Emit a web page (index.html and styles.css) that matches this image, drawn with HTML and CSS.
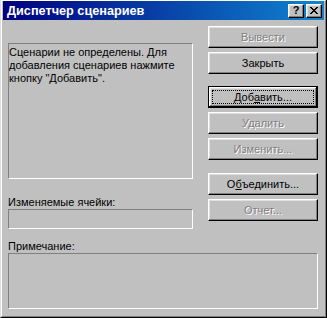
FILE: index.html
```html
<!DOCTYPE html>
<html lang="ru">
<head>
    <meta charset="UTF-8">
    <title>Диспетчер сценариев</title>
    <link rel="stylesheet" href="styles.css">
</head>
<body>

<div class="window">
    <div class="frame">
        <div class="titlebar">
            <span class="title">Диспетчер сценариев</span>
            <div class="caption-buttons">
                <button class="cap-btn help">?</button>
                <button class="cap-btn close">
                    <svg width="8" height="7" viewBox="0 0 8 7">
                        <path d="M0 0h2v1h1v1h2v-1h1v-1h2v1h-1v1h-1v1h-1v1h1v1h1v1h1v1h-2v-1h-1v-1h-2v1h-1v1h-2v-1h1v-1h1v-1h1v-1h-1v-1h-1v-1h-1z" fill="#000"/>
                    </svg>
                </button>
            </div>
        </div>

        <div class="client">
            <div class="main">
                <div class="left">
                    <div class="listbox">Сценарии не определены. Для<br>добавления сценариев нажмите<br>кнопку "Добавить".</div>
                    <label class="field-label">Изменяемые ячейки:</label>
                    <div class="field"></div>
                </div>

                <div class="buttons">
                    <button class="btn disabled">Вывести</button>
                    <button class="btn">Закрыть</button>
                    <button class="btn default group"><span class="focus">Доб<u>а</u>вить...</span></button>
                    <button class="btn disabled">Удалить</button>
                    <button class="btn disabled">Изменить...</button>
                    <button class="btn group2">О<u>б</u>ъединить...</button>
                    <button class="btn disabled">Отчет...</button>
                </div>
            </div>

            <label class="field-label note-label">Примечание:</label>
            <div class="note"></div>
        </div>
    </div>
</div>

</body>
</html>
```

FILE: styles.css
```css
* {
    margin: 0;
    padding: 0;
    box-sizing: border-box;
}
body {
    font-family: 'Liberation Sans', Arial, sans-serif;
    font-size: 11px;
    background-color: #c0c0c0;
    color: #000;
}
.window {
    width: 327px;
    height: 318px;
    background-color: #c0c0c0;
    border-left: 1px solid #dfdfdf;
    border-right: 1px solid #000;
    border-bottom: 1px solid #000;
}
.frame {
    height: 100%;
    border: 1px solid;
    border-color: #fff #808080 #808080 #fff;
    padding: 0 1px 1px 1px;
    display: flex;
    flex-direction: column;
}
.titlebar {
    height: 19px;
    background: linear-gradient(to right, #000080, #1084d0);
    display: flex;
    align-items: center;
    justify-content: space-between;
    padding: 0 2px 0 4px;
}
.title {
    color: #fff;
    font-weight: bold;
    font-size: 12.7px;
}
.caption-buttons {
    display: flex;
    gap: 2px;
}
.cap-btn {
    width: 16px;
    height: 14px;
    background-color: #c0c0c0;
    border: 1px solid;
    border-color: #fff #000 #000 #fff;
    box-shadow: inset -1px -1px #808080, inset 1px 1px #dfdfdf;
    display: flex;
    align-items: center;
    justify-content: center;
    font-family: 'Liberation Sans', Arial, sans-serif;
    font-size: 11px;
    font-weight: bold;
    line-height: 1;
    color: #000;
}
.client {
    flex: 1;
    padding: 6px 6px 0 5px;
}
.main {
    display: grid;
    grid-template-columns: 185px 110px;
    column-gap: 15px;
}
.left {
    padding-top: 17px;
    display: flex;
    flex-direction: column;
}
.listbox {
    height: 136px;
    border: 1px solid;
    border-color: #808080 #fff #fff #808080;
    padding-top: 2px;
    line-height: 13px;
    white-space: nowrap;
}
.field-label {
    display: block;
    line-height: 13px;
    margin-top: 17px;
}
.field {
    height: 20px;
    border: 1px solid;
    border-color: #808080 #fff #fff #808080;
}
.buttons {
    display: flex;
    flex-direction: column;
}
.btn {
    height: 22px;
    margin-top: 4px;
    background-color: #c0c0c0;
    border: 1px solid;
    border-color: #fff #000 #000 #fff;
    box-shadow: inset -1px -1px #808080, inset 1px 1px #dfdfdf;
    font-family: 'Liberation Sans', Arial, sans-serif;
    font-size: 11px;
    color: #000;
    display: flex;
    align-items: center;
    justify-content: center;
}
.btn:first-child {
    margin-top: 0;
}
.btn.group {
    margin-top: 12px;
}
.btn.group2 {
    margin-top: 13px;
}
.btn.disabled {
    color: #808080;
    text-shadow: 1px 1px 0 #fff;
}
.btn.default {
    border-color: #000;
    box-shadow: inset -1px -1px #000, inset 1px 1px #fff, inset -2px -2px #808080, inset 2px 2px #dfdfdf;
    padding: 3px;
    align-items: stretch;
}
.focus {
    flex: 1;
    border: 1px dotted #000;
    display: flex;
    align-items: center;
    justify-content: center;
}
u {
    text-decoration: underline;
}
.note-label {
    margin-top: 11px;
}
.note {
    height: 56px;
    border: 1px solid;
    border-color: #808080 #fff #fff #808080;
}
```
